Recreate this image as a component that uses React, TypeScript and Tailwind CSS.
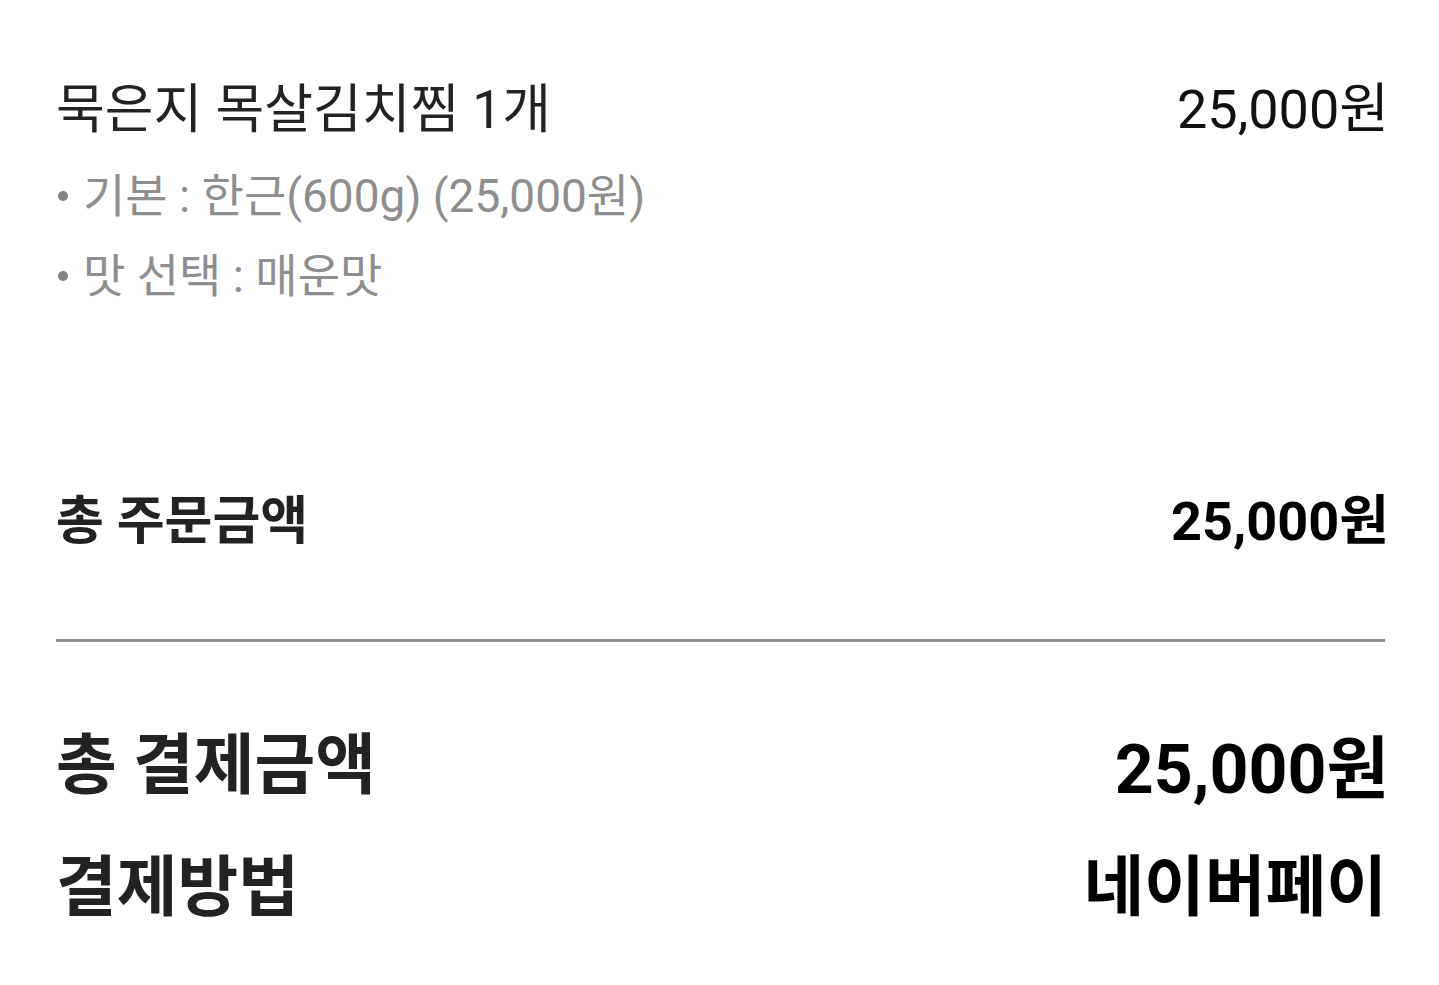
import React from 'react';

const font = "font-['Roboto','Noto_Sans_CJK_KR',sans-serif]";

const options = [
  { label: '기본', value: '한근(600g) (25,000원)' },
  { label: '맛 선택', value: '매운맛' },
];

export default function App() {
  return (
    <div className={`${font} min-h-[985px] bg-white pl-[56px] pr-[54px] pt-[80px]`}>
      <div className="flex items-start justify-between">
        <div>
          <div className="text-[53px] leading-[60px] text-[#222222]">묵은지 목살김치찜 1개</div>
          <ul className="mt-[26px] space-y-[20px]">
            {options.map((o) => (
              <li key={o.label} className="flex items-center pl-[2px] text-[46px] leading-[60px] text-[#8e8e8e]">
                <span className="mr-[15px] inline-block h-[10px] w-[10px] rounded-full bg-[#86827f]" />
                {o.label} : {o.value}
              </li>
            ))}
          </ul>
        </div>
        <div className="-mr-[4px] text-[54px] leading-[60px] text-[#111111]">25,000원</div>
      </div>

      <div className="mt-[183px] flex items-center justify-between">
        <span className="text-[52px] font-bold leading-[66px] text-[#222222]">총 주문금액</span>
        <span className="-mr-[4px] text-[54px] font-bold leading-[66px] text-black">25,000원</span>
      </div>

      <div className="mt-[84px] h-[3px] bg-[#8e8e8e]" />

      <div className="mt-[84px] flex items-center justify-between">
        <span className="text-[66px] font-bold leading-[80px] text-[#222222]">총 결제금액</span>
        <span className="-mr-[4px] pt-[8px] text-[68px] font-bold leading-[72px] text-black">25,000원</span>
      </div>
      <div className="mt-[42px] flex items-center justify-between">
        <span className="text-[66px] font-bold leading-[80px] text-[#222222]">결제방법</span>
        <span className="-mr-[2px] text-[66px] font-bold leading-[80px] text-black">네이버페이</span>
      </div>
    </div>
  );
}
